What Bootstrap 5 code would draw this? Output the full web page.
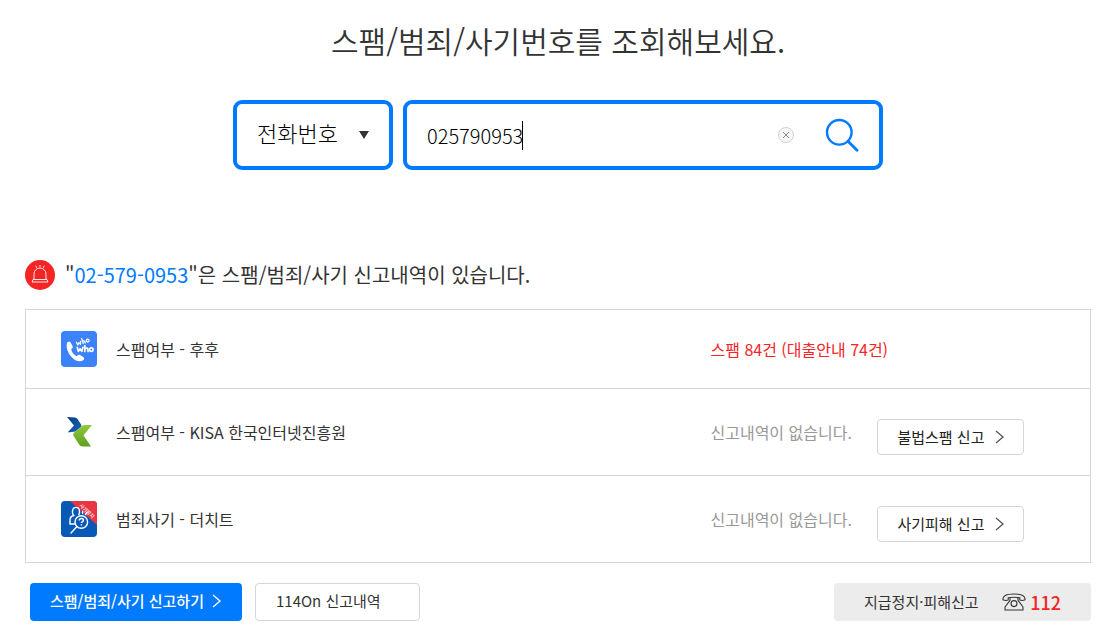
<!DOCTYPE html>
<html lang="ko">
<head>
<meta charset="utf-8">
<meta name="viewport" content="width=device-width, initial-scale=1">
<title>스팸/범죄/사기번호 조회</title>
<link href="https://cdn.jsdelivr.net/npm/bootstrap@5.3.0/dist/css/bootstrap.min.css" rel="stylesheet">
<style>
  :root { --brand: #007bff; --alert: #f52425; --line: #d6d6d6; --ink: #333; }
  body { font-family: "Noto Sans CJK KR", sans-serif; font-size: 16px; line-height: 24px; color: var(--ink); background: #fff; }
  .page { padding: 18px 26px 0 25px; }
  .page-title { font-family: "Noto Sans CJK KR DemiLight", "Noto Sans CJK KR", sans-serif; font-size: 30px; line-height: 44px; font-weight: 350; color: #333; margin-bottom: 38px; }
  .search-form { max-width: 650px; gap: 10px; margin-bottom: 90px; }
  .kind-select { flex: 0 0 160px; height: 70px; padding: 0 20px 6px; border: 4px solid var(--brand); border-radius: 9px; font-size: 22px; font-weight: 300; color: #000; background-image: url("data:image/svg+xml,%3Csvg xmlns='http://www.w3.org/2000/svg' viewBox='0 0 10 8'%3E%3Cpath fill='%23333' d='M0 0h10L5 8z'/%3E%3C/svg%3E"); background-size: 10px 8px; background-position: right 20px center; }
  .search-box { height: 70px; border: 4px solid var(--brand); border-radius: 9px; padding: 0 20px; }
  .search-input { font-size: 20px; line-height: 30px; font-weight: 300; color: #000; padding: 2px 0 0; }
  .search-input:focus, .kind-select:focus { box-shadow: none; border-color: var(--brand); }
  .text-caret { left: 95px; top: 2px; width: 1px; height: 29px; background: #000; }
  .clear-btn { margin-right: 30px; }
  .result-title { font-size: 20px; line-height: 30px; font-weight: 400; gap: 10px; margin-bottom: 19px; }
  .tone-brand { color: var(--brand); }
  .tone-alert { color: var(--alert) !important; }
  .tone-muted { color: #999 !important; }
  .result-table { border: 1px solid var(--line); margin-bottom: 20px; table-layout: fixed; }
  .result-table > tbody > tr { height: 87px; border-bottom: 1px solid var(--line); }
  .result-table > tbody > tr:first-child { height: 79px; }
  .result-table > tbody > tr > * { padding: 0; border: 0; font-weight: 400; color: var(--ink); background: none; vertical-align: middle; }
  .col-status { width: 167px; }
  .col-action { width: 213px; }
  .service { padding-left: 35px; gap: 19px; }
  .line-btn { border: 1px solid var(--line); border-radius: 4px; background: #fff; color: var(--ink); }
  .report-btn { width: 147px; height: 36px; margin-top: 10px; font-size: 15px; color: #222; gap: 11px; }
  .foot-row { padding-left: 5px; }
  .foot-btn { height: 38px; padding: 0 20px 2px; font-size: 15px; border-radius: 4px; }
  .send-btn { width: 212px; background: var(--brand); border: 0; color: #fff; font-weight: 500; gap: 8px; }
  .history-btn { width: 165px; margin-left: 13px; }
  .call-box { width: 257px; height: 38px; padding: 0 30px; border-radius: 4px; background: #ececec; font-size: 15px; }
  .call-number { font-size: 18px; font-weight: 500; text-decoration: none; }
</style>
</head>
<body>
<main class="page">
  <h1 class="page-title text-center">스팸/범죄/사기번호를 조회해보세요.</h1>

  <form class="search-form d-flex mx-auto" onsubmit="return false">
    <select class="form-select kind-select" aria-label="조회 구분">
      <option>전화번호</option>
    </select>
    <div class="search-box d-flex align-items-center flex-grow-1">
      <div class="position-relative flex-grow-1">
        <input class="form-control search-input border-0 bg-transparent rounded-0" type="text" value="025790953" aria-label="번호 입력">
        <span class="text-caret position-absolute"></span>
      </div>
      <button class="clear-btn btn p-0 border-0 d-flex" type="button" aria-label="지우기">
        <svg width="18" height="18" viewBox="0 0 18 18" fill="none"><circle cx="9" cy="9" r="7.5" fill="#f7f7f7" stroke="#d2d2d2"/><path d="M6 6l6 6M12 6l-6 6" stroke="#888"/></svg>
      </button>
      <button class="btn p-0 border-0 d-flex" type="submit" aria-label="조회">
        <svg width="34" height="34" viewBox="0 0 34 34" fill="none" stroke="#007bff" stroke-width="2.4"><circle cx="14.3" cy="14.3" r="12.3"/><path d="M23 23.2l9 9" stroke-width="2.8" stroke-linecap="round"/></svg>
      </button>
    </div>
  </form>

  <h2 class="result-title d-flex align-items-center">
    <svg width="30" height="30" viewBox="0 0 30 30" fill="none"><circle cx="15" cy="15" r="15" fill="#f52425"/><path d="M9 19v-5a6 6 0 0 1 12 0v5M8 19.5h14l1 2.5H7zM15 5v2.2M10.7 5.7l1 2M19.3 5.7l-1 2" stroke="#fff" stroke-width=".9"/></svg>
    <span>"<span class="tone-brand">02-579-0953</span>"은 스팸/범죄/사기 신고내역이 있습니다.</span>
  </h2>

  <table class="table result-table">
    <colgroup><col><col class="col-status"><col class="col-action"></colgroup>
    <tbody>
      <tr>
        <th scope="row"><div class="service d-flex align-items-center">
          <svg width="36" height="36" viewBox="0 0 36 36"><rect width="36" height="36" rx="4" fill="#3b82fb"/><path d="M6 12.2C6.6 10.6 9 10.2 10 12l1.600 3.300c.6 1.400-.2 2.200-1.500 3 .8 3.200 2.800 5.500 5.700 6.900 1.200-1.500 2.200-1.800 3.600-1l2.800 1.800c1.400 1 1.200 2.300 0 3.300-3.200 2.300-8.200.8-11.800-3.500C6.600 21.500 4.800 15.800 6 12.200z" fill="#fff"/><g fill="none" stroke="#fff" stroke-linecap="round" stroke-linejoin="round"><path d="M15.500 11.300l1.300 2.600 1-2.200 1.700 1.500.1-2.900M20.700 7.600l1.600 4.900M21.700 10.500q1.400-1.300 2.100.2l.5 1.200" stroke-width="1.3"/><circle cx="26.700" cy="9.600" r="1.400" stroke-width="1.3"/><path d="M16.300 16.400l1.100 4 1.700-2.600 1.700 2.600 1.100-4M23.800 14.500v6M23.900 18q1.900-1.700 3.100.1v2.400" stroke-width="1.7"/><circle cx="30.300" cy="18.600" r="1.800" stroke-width="1.7"/></g></svg>
          스팸여부 - 후후</div></th>
        <td class="tone-alert" colspan="2">스팸 84건 (대출안내 74건)</td>
      </tr>
      <tr>
        <th scope="row"><div class="service d-flex align-items-center">
          <svg width="36" height="36" viewBox="0 0 36 36"><defs><linearGradient id="kisaBlue" x2="1" y2="1"><stop stop-color="#083b80"/><stop offset="1" stop-color="#1764bd"/></linearGradient><linearGradient id="kisaGreen" y2="1" x2="0"><stop stop-color="#91c93d"/><stop offset="1" stop-color="#5f9f20"/></linearGradient></defs><path d="M6 3l8 .4q1.600.2 2.500 1.500l3.600 5.500q.8 1.300-.3 2.500l-4.700 4.200q-1.600 1.300-8.300 1.100l6.200-6.700z" fill="url(#kisaBlue)"/><path d="M31 11h-7.300q-1.800 0-3.100 1.300l-7.600 6.500q-1.500 1.400-.5 3l5.800 9q1.100 1.700 3 1.700h8.700l-7.500-11.200z" fill="url(#kisaGreen)"/></svg>
          스팸여부 - KISA 한국인터넷진흥원</div></th>
        <td class="tone-muted">신고내역이 없습니다.</td>
        <td><button class="btn line-btn report-btn p-0 d-flex align-items-center justify-content-center" type="button">불법스팸 신고
          <svg width="9" height="14" viewBox="0 0 9 14" fill="none" stroke="#555" stroke-width="1.3"><path d="M1 1l7 6-7 6"/></svg></button></td>
      </tr>
      <tr>
        <th scope="row"><div class="service d-flex align-items-center">
          <svg width="36" height="36" viewBox="0 0 36 36"><defs><clipPath id="cheatClip"><rect width="36" height="36" rx="4"/></clipPath></defs><g clip-path="url(#cheatClip)"><rect width="36" height="36" fill="#0759b8"/><path d="M9 0h27v24z" fill="#ea3545"/></g><text transform="translate(18 5) rotate(43)" font-size="5" font-weight="500" fill="#fff">사기방지</text><g fill="none" stroke="#fff" stroke-width="1.4" stroke-linecap="round"><path d="M14 23H9v-4q0-3.500 3.700-4.500-1.500-1.700-1.200-4.300.4-3.800 3.500-3.800t3.500 3.800q.2 2-.7 3.300M21.500 12.500l.2-2.200M24.500 13.500l1.500-2.300M16 25.500l-6 6.500"/><circle cx="20.300" cy="21" r="6.300"/></g><path d="M18.300 19.500q.1-1.900 2.100-1.900t2 1.700q0 1-1.100 1.500-.9.500-.9 1.300M20.400 23.300v1.300" fill="none" stroke="#fff" stroke-width="1.5"/></svg>
          범죄사기 - 더치트</div></th>
        <td class="tone-muted">신고내역이 없습니다.</td>
        <td><button class="btn line-btn report-btn p-0 d-flex align-items-center justify-content-center" type="button">사기피해 신고
          <svg width="9" height="14" viewBox="0 0 9 14" fill="none" stroke="#555" stroke-width="1.3"><path d="M1 1l7 6-7 6"/></svg></button></td>
      </tr>
    </tbody>
  </table>

  <div class="foot-row d-flex align-items-center">
    <button class="btn foot-btn send-btn d-flex align-items-center text-nowrap" type="button">스팸/범죄/사기 신고하기
      <svg class="flex-shrink-0" width="9" height="14" viewBox="0 0 9 14" fill="none" stroke="#fff" stroke-width="1.3"><path d="M1 1l7 6-7 6"/></svg></button>
    <button class="btn line-btn foot-btn history-btn text-start text-nowrap" type="button">114On 신고내역</button>
    <div class="call-box d-flex align-items-center ms-auto text-nowrap">
      <span>지급정지·피해신고</span>
      <svg class="ms-auto me-1" width="24" height="18" viewBox="0 0 24 18" fill="none" stroke="#333" stroke-width="1.1" stroke-linejoin="round"><path d="M1 6.800Q.2 1 12 1t11 5.800q-2.500 1.300-5.200.3V4.800Q12 3.800 6.200 4.800v2.300Q3.500 8.100 1 6.800zM8 4.800v2.500L3 14v3h18v-3l-5-6.700V4.800"/><circle cx="12" cy="10.600" r="3"/></svg>
      <a class="call-number tone-alert" href="tel:112">112</a>
    </div>
  </div>
</main>
<script src="https://cdn.jsdelivr.net/npm/bootstrap@5.3.0/dist/js/bootstrap.bundle.min.js"></script>
</body>
</html>
